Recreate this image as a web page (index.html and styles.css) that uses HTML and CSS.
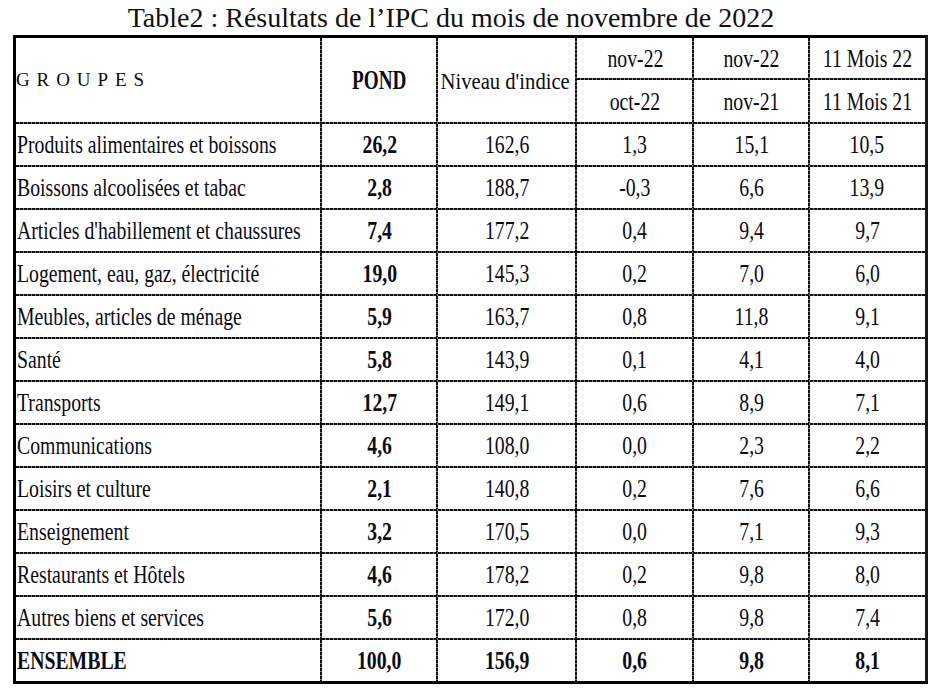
FILE: index.html
```html
<!DOCTYPE html>
<html lang="fr">
<head>
<meta charset="utf-8">
<title>Table2 : Résultats de l’IPC</title>
<link rel="stylesheet" href="styles.css">
</head>
<body>
<div class="page">
  <h1 class="title">Table2 : Résultats de l’IPC du mois de novembre de 2022</h1>
  <table class="ipc">
    <colgroup>
      <col class="c-grp"><col class="c-pond"><col class="c-niv"><col class="c-a"><col class="c-b"><col class="c-c">
    </colgroup>
    <thead>
      <tr class="h1">
        <th rowspan="2" class="groupes">GROUPES</th>
        <th rowspan="2" class="pond"><span class="t">POND</span></th>
        <th rowspan="2" class="niv"><span class="t">Niveau d'indice</span></th>
        <th><span class="t">nov-22</span></th>
        <th><span class="t">nov-22</span></th>
        <th class="last"><span class="t">11 Mois 22</span></th>
      </tr>
      <tr class="h2">
        <th><span class="t">oct-22</span></th>
        <th><span class="t">nov-21</span></th>
        <th class="last"><span class="t">11 Mois 21</span></th>
      </tr>
    </thead>
    <tbody>
      <tr><td class="lbl"><span class="t">Produits alimentaires et boissons</span></td><td class="b"><span class="t">26,2</span></td><td><span class="t">162,6</span></td><td><span class="t">1,3</span></td><td><span class="t">15,1</span></td><td class="last"><span class="t">10,5</span></td></tr>
      <tr><td class="lbl"><span class="t">Boissons alcoolisées et tabac</span></td><td class="b"><span class="t">2,8</span></td><td><span class="t">188,7</span></td><td><span class="t">-0,3</span></td><td><span class="t">6,6</span></td><td class="last"><span class="t">13,9</span></td></tr>
      <tr><td class="lbl"><span class="t">Articles d'habillement et chaussures</span></td><td class="b"><span class="t">7,4</span></td><td><span class="t">177,2</span></td><td><span class="t">0,4</span></td><td><span class="t">9,4</span></td><td class="last"><span class="t">9,7</span></td></tr>
      <tr><td class="lbl"><span class="t">Logement, eau, gaz, électricité</span></td><td class="b"><span class="t">19,0</span></td><td><span class="t">145,3</span></td><td><span class="t">0,2</span></td><td><span class="t">7,0</span></td><td class="last"><span class="t">6,0</span></td></tr>
      <tr><td class="lbl"><span class="t">Meubles, articles de ménage</span></td><td class="b"><span class="t">5,9</span></td><td><span class="t">163,7</span></td><td><span class="t">0,8</span></td><td><span class="t">11,8</span></td><td class="last"><span class="t">9,1</span></td></tr>
      <tr><td class="lbl"><span class="t">Santé</span></td><td class="b"><span class="t">5,8</span></td><td><span class="t">143,9</span></td><td><span class="t">0,1</span></td><td><span class="t">4,1</span></td><td class="last"><span class="t">4,0</span></td></tr>
      <tr><td class="lbl"><span class="t">Transports</span></td><td class="b"><span class="t">12,7</span></td><td><span class="t">149,1</span></td><td><span class="t">0,6</span></td><td><span class="t">8,9</span></td><td class="last"><span class="t">7,1</span></td></tr>
      <tr><td class="lbl"><span class="t">Communications</span></td><td class="b"><span class="t">4,6</span></td><td><span class="t">108,0</span></td><td><span class="t">0,0</span></td><td><span class="t">2,3</span></td><td class="last"><span class="t">2,2</span></td></tr>
      <tr><td class="lbl"><span class="t">Loisirs et culture</span></td><td class="b"><span class="t">2,1</span></td><td><span class="t">140,8</span></td><td><span class="t">0,2</span></td><td><span class="t">7,6</span></td><td class="last"><span class="t">6,6</span></td></tr>
      <tr><td class="lbl"><span class="t">Enseignement</span></td><td class="b"><span class="t">3,2</span></td><td><span class="t">170,5</span></td><td><span class="t">0,0</span></td><td><span class="t">7,1</span></td><td class="last"><span class="t">9,3</span></td></tr>
      <tr><td class="lbl"><span class="t">Restaurants et Hôtels</span></td><td class="b"><span class="t">4,6</span></td><td><span class="t">178,2</span></td><td><span class="t">0,2</span></td><td><span class="t">9,8</span></td><td class="last"><span class="t">8,0</span></td></tr>
      <tr><td class="lbl"><span class="t">Autres biens et services</span></td><td class="b"><span class="t">5,6</span></td><td><span class="t">172,0</span></td><td><span class="t">0,8</span></td><td><span class="t">9,8</span></td><td class="last"><span class="t">7,4</span></td></tr>
      <tr class="total"><td class="lbl"><span class="t">ENSEMBLE</span></td><td><span class="t">100,0</span></td><td><span class="t">156,9</span></td><td><span class="t">0,6</span></td><td><span class="t">9,8</span></td><td class="last"><span class="t">8,1</span></td></tr>
    </tbody>
  </table>
</div>
</body>
</html>
```

FILE: styles.css
```css
html, body {
  margin: 0;
  padding: 0;
  background: #ffffff;
}

.page {
  width: 934px;
  height: 689px;
  overflow: hidden;
  font-family: "Liberation Serif", "Times New Roman", serif;
  color: #0b0b16;
}

.title {
  margin: 0;
  padding-right: 32px;
  font-family: "Liberation Serif", "Times New Roman", serif;
  font-size: 28px;
  font-weight: normal;
  line-height: 35px;
  height: 35px;
  text-align: center;
  color: #111;
}

.ipc {
  margin-left: 13px;
  width: 912px;
  border-collapse: collapse;
  table-layout: fixed;
  border: 3px solid #000;
  border-right-color: #1a1a1a;
  font-family: "Liberation Serif", "Times New Roman", serif;
  font-size: 25px;
  color: #0b0b16;
}

.c-grp { width: 307px; }
.c-pond { width: 116px; }
.c-niv { width: 139px; }
.c-a { width: 117px; }
.c-b { width: 116px; }
.c-c { width: 117px; }

.ipc th,
.ipc td {
  border: none;
  padding: 0;
  font-family: "Liberation Serif", "Times New Roman", serif;
  text-align: center;
  vertical-align: middle;
  font-weight: normal;
  line-height: 1.1;
  white-space: nowrap;
  overflow: visible;
  background:
    repeating-linear-gradient(90deg, #111 0 3px, #7a7a7a 3px 4px) left bottom / 100% 2px no-repeat,
    repeating-linear-gradient(180deg, #111 0 3px, #7a7a7a 3px 4px) right top / 2px 100% no-repeat;
}

.ipc .last {
  background:
    repeating-linear-gradient(90deg, #111 0 3px, #7a7a7a 3px 4px) left bottom / 100% 2px no-repeat;
}

.ipc tr.total td { background: none; }
.ipc tr.total td:not(.last) {
  background:
    repeating-linear-gradient(180deg, #111 0 3px, #7a7a7a 3px 4px) right top / 2px 100% no-repeat;
}

.ipc tr.h1 { height: 43px; }
.ipc tr.h2 { height: 44px; }
.ipc tbody tr { height: 43px; }

.t {
  display: inline-block;
  transform: scaleX(0.79);
  transform-origin: center;
}

.ipc .groupes {
  text-align: left;
  padding-left: 0;
  font-size: 19px;
  letter-spacing: 6.9px;
}

.ipc .pond {
  font-weight: bold;
  font-size: 27px;
}
.ipc .pond .t { transform: scaleX(0.71); }

.ipc .niv {
  font-size: 24px;
  padding-right: 3px;
}
.ipc .niv .t {
  margin: 0 -12px;
  transform: scaleX(0.86);
}

.ipc .lbl {
  text-align: left;
  padding-left: 1px;
}
.ipc .lbl .t { transform-origin: left center; }

.ipc .b,
.ipc .total td {
  font-weight: bold;
}
```
